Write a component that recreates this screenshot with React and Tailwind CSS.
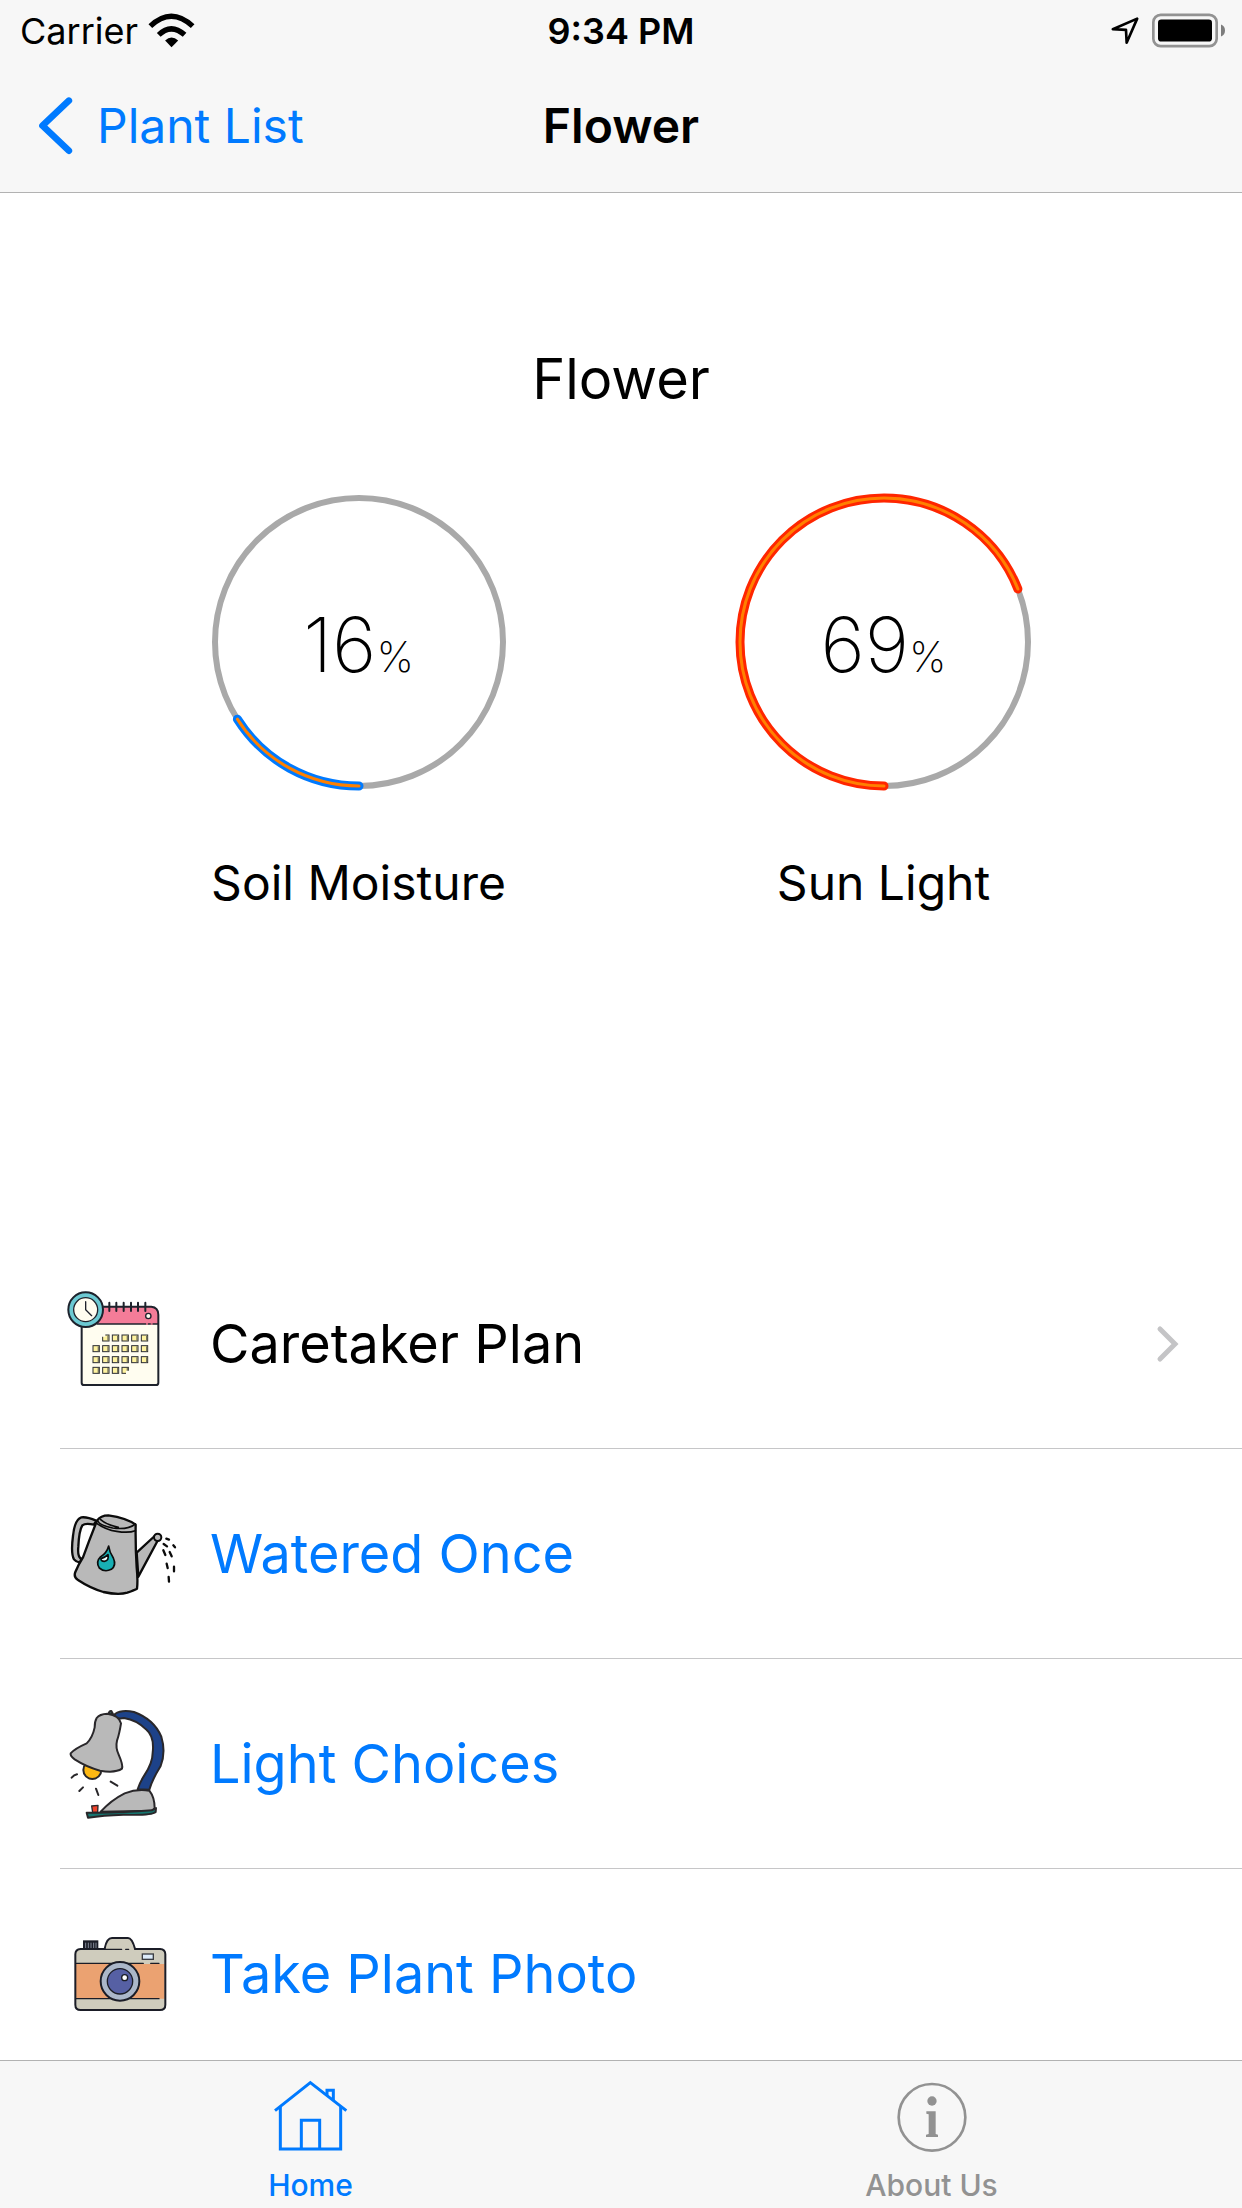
import React from "react";

function WifiIcon() {
  return (
    <svg viewBox="446 36 140 104" className="h-[35px] w-[47px]" aria-hidden="true">
      <g fill="none" stroke="#000">
        <path d="M453 75 Q515 16 579 75" strokeWidth="16" />
        <path d="M478 101 Q515 65 555 101" strokeWidth="16" />
      </g>
      <path d="M497 118 Q516 99 536 118 L516 138 Z" fill="#000" />
    </svg>
  );
}

function LocationIcon() {
  return (
    <svg viewBox="64 48 90 88" className="h-[29px] w-[30px]" aria-hidden="true">
      <path d="M146 56 L72 88 L112 90 L114 129 Z" fill="none" stroke="#000" strokeWidth="8" strokeLinejoin="round" />
    </svg>
  );
}

function BatteryIcon() {
  return (
    <svg viewBox="189 38 222 104" className="h-[35px] w-[74px]" aria-hidden="true">
      <rect x="193" y="43" width="190" height="94" rx="22" fill="none" stroke="#929292" strokeWidth="8" />
      <rect x="207" y="57" width="162" height="66" rx="10" fill="#000" />
      <path d="M396 72 Q408 77 408 90 Q408 103 396 108 Z" fill="#7d7d7d" />
    </svg>
  );
}

function CalendarIcon() {
  const rows = [
    { y: 165, xs: [158, 187, 216, 245, 274] },
    { y: 197, xs: [129, 158, 187, 216, 245, 274] },
    { y: 230, xs: [129, 158, 187, 216, 245, 274] },
    { y: 262, xs: [129, 158, 187, 216] },
  ];
  return (
    <svg viewBox="30 12 360 360" className="size-[120px] shrink-0" aria-hidden="true">
      <path d="M95 130 H325 V308 Q325 315 318 315 H102 Q95 315 95 308 Z" fill="#fffdf0" />
      <path d="M110 80 H305 Q325 82 325 104 V132 H110 Z" fill="#f47c98" />
      <path d="M152 80 H304 Q325 82 325 104 V308 Q325 315 318 315 H102 Q95 315 95 308 V135" fill="none" stroke="#1e222c" strokeWidth="6" />
      <path d="M140 132 H325" stroke="#1e222c" strokeWidth="4" />
      <path d="M288 132 H294 M302 132 H308" stroke="#f47c98" strokeWidth="4" />
      <path d="M178 68 V93 M199 68 V93 M221 68 V93 M243 68 V93 M264 68 V93 M286 68 V93" stroke="#1e222c" strokeWidth="6" strokeLinecap="round" />
      <circle cx="295" cy="108" r="8" fill="#fffdf0" stroke="#1e222c" strokeWidth="4" />
      {rows.map((row) =>
        row.xs.map((x) => (
          <g key={`${row.y}-${x}`}>
            <rect x={x} y={row.y} width="19" height="18" fill="#fff3a0" stroke="#2a2c33" strokeWidth="3" />
            <path d={`M${x + 16} ${row.y + 2} V${row.y + 17}`} stroke="#77765c" strokeWidth="4" />
          </g>
        ))
      )}
      <path d="M154 160 H166 V170 H154 Z M228 272 H240 V285 H228 Z" fill="#fffdf0" />
      <circle cx="107" cy="89" r="45" fill="#fffdf0" stroke="#6cc9d2" strokeWidth="17" />
      <circle cx="107" cy="89" r="52" fill="none" stroke="#1e222c" strokeWidth="6" />
      <circle cx="107" cy="89" r="36" fill="#fffdf0" stroke="#1e222c" strokeWidth="4" />
      <path d="M107 65 V89 L125 107" fill="none" stroke="#1e222c" strokeWidth="4" strokeLinecap="round" />
    </svg>
  );
}

function WateringCanIcon() {
  return (
    <svg viewBox="30 12 360 360" className="size-[120px] shrink-0" aria-hidden="true">
      <g stroke="#0b0b0b" strokeWidth="7" strokeLinejoin="round" strokeLinecap="round">
        <path d="M138 92 Q112 80 94 82 Q74 88 69 138 Q62 190 72 208 Q78 216 90 218 L94 206 Q82 202 85 170 Q87 122 97 106 Q106 98 132 104 Z" fill="#b9b9b9" />
        <path d="M260 188 L314 138 L324 150 L265 260 Z" fill="#b9b9b9" />
        <path d="M141 92 Q118 150 99 202 Q86 222 76 246 Q70 262 84 270 Q120 294 160 306 Q205 316 232 308 Q254 300 261 296 Q264 270 260 232 Q256 170 257 104 Q230 84 175 76 Q152 76 141 92 Z" fill="#b9b9b9" />
        <path d="M144 94 Q150 106 188 114 Q234 120 256 102 M140 100 Q168 120 200 124 Q236 130 256 122 M152 89 Q168 104 205 112" fill="none" strokeWidth="5" />
        <circle cx="323" cy="142" r="11" fill="#b9b9b9" strokeWidth="6" />
        <path d="M176 168 Q178 186 190 204 Q200 226 184 238 Q164 248 148 234 Q136 216 152 200 Q170 190 176 168 Z" fill="#18afb4" strokeWidth="5" />
        <path d="M174 194 Q178 212 163 214 Q152 214 153 206 Q166 202 174 194 Z" fill="#e7ffff" strokeWidth="5" />
        <path d="M349 146 L357 149 M341 162 L351 169 M370 166 L375 172 M340 181 L346 195 M359 186 L365 199 M350 221 L353 234 M372 230 V244 M356 261 L357 275" fill="none" />
      </g>
    </svg>
  );
}

function LampIcon() {
  return (
    <svg viewBox="30 42 360 360" className="size-[120px] shrink-0" aria-hidden="true">
      <g stroke="#29272a" strokeWidth="6" strokeLinejoin="round" strokeLinecap="round">
        <path d="M195 72 Q215 58 252 66 Q312 88 334 140 Q348 186 332 228 Q306 270 298 299 L263 298 Q270 276 283 256 Q308 218 308 188 Q314 140 288 118 Q260 90 222 84 Q205 88 195 80 Z" fill="#1d4289" />
        <path d="M176 72 Q177 62 184 63 L190 74 Z" fill="#2c6b62" />
        <circle cx="127" cy="240" r="27" fill="#fdb813" />
        <path d="M172 71 Q149 72 140 84 Q134 94 134 112 Q128 142 110 160 Q74 176 62 190 Q60 198 74 208 Q108 230 150 242 Q196 250 216 236 Q220 226 206 194 Q196 172 201 152 Q208 132 213 100 Q208 76 172 71 Z" fill="#b9b9b9" />
        <path d="M152 365 Q184 330 224 310 Q260 296 298 302 Q314 322 314 355 L306 362 Z" fill="#b9b9b9" />
        <path d="M110 368 Q200 370 306 361 L318 354 L317 366 Q304 377 220 374 Q160 376 114 383 Z" fill="#16756f" />
        <path d="M125 348 L144 346 L143 366 L128 367 Z" fill="#f0442c" strokeWidth="4" />
        <path d="M65 263 Q72 255 81 253 M88 303 L99 292 M138 296 L145 315 M182 275 L202 287" fill="none" />
      </g>
    </svg>
  );
}

function CameraIcon() {
  return (
    <svg viewBox="30 -18 360 360" className="size-[120px] shrink-0" aria-hidden="true">
      <rect x="76" y="87" width="270" height="183" rx="16" fill="#cfccbd" />
      <path d="M78 132 H344 V236 H78 Z" fill="#eba271" />
      <path d="M164 88 Q168 54 184 54 H238 Q250 58 255 88 Z" fill="#cfccbd" />
      <g stroke="#1b1d27" strokeWidth="6" fill="none" strokeLinecap="round">
        <path d="M164 87 H92 Q76 88 76 103 V254 Q76 270 92 270 H330 Q346 270 346 254 V103 Q346 88 330 87 H255" />
        <path d="M164 86 Q170 54 186 54 H234 Q246 54 255 86" />
        <path d="M166 88 H215 M227 88 H236 M79 130 H280 M302 130 H327 M79 236 H327" strokeWidth="4" />
      </g>
      <rect x="99" y="61" width="46" height="26" fill="#1b1d27" />
      <path d="M107 68 V84 M115 68 V84 M123 68 V84 M131 68 V84 M138 68 V84" stroke="#848a99" strokeWidth="3" />
      <rect x="277" y="102" width="33" height="16" fill="#dcebfa" stroke="#3a3c42" strokeWidth="4" />
      <circle cx="210" cy="184" r="58" fill="#abb7c9" stroke="#1b1d27" strokeWidth="6" />
      <circle cx="210" cy="184" r="38" fill="#5660a4" stroke="#1b1d27" strokeWidth="4" />
      <circle cx="224" cy="173" r="9" fill="#fff" stroke="#1b1d27" strokeWidth="4" />
    </svg>
  );
}

function HomeIcon() {
  return (
    <svg viewBox="102 90 222 222" className="size-[74px]" fill="none" stroke="currentColor" strokeWidth="9" aria-hidden="true">
      <path d="M105 182 L211 98 L319 182" />
      <path d="M121 171 V297 H302 V171" />
      <path d="M184 297 V211 H239 V297" />
      <path d="M261 136 V121 H280 V150" />
    </svg>
  );
}

function InfoIcon() {
  return (
    <svg viewBox="163 90 222 222" className="size-[74px]" fill="currentColor" aria-hidden="true">
      <circle cx="274" cy="202" r="100" fill="none" stroke="currentColor" strokeWidth="8" />
      <circle cx="274" cy="153" r="14" />
      <path d="M257 184 H285 V252 L292 254 V261 H256 V254 L264 252 V193 L257 191 Z" />
    </svg>
  );
}

function Gauge({ value, label, color }) {
  return (
    <div className="flex flex-col items-center">
      <div className="grid place-items-center">
        <svg viewBox="-150 -150 300 300" className="col-start-1 row-start-1 size-[300px]" fill="none" aria-hidden="true">
          <circle r="144" stroke="#a9a9a9" strokeWidth="6" />
          <g transform="rotate(90)" strokeLinecap="round">
            <circle r="144" pathLength="100" strokeDasharray={`${value} 100`} stroke={color} strokeWidth="9" />
            <circle r="144" pathLength="100" strokeDasharray={`${value} 100`} stroke="#ff8000" strokeWidth="3" />
          </g>
        </svg>
        <p className="col-start-1 row-start-1 pt-1 text-[76px] leading-none font-extralight">
          {value}
          <span className="text-[42px]">%</span>
        </p>
      </div>
      <h2 className="mt-[61px] text-[48px] leading-[60px]">{label}</h2>
    </div>
  );
}

const actions = [
  { label: "Caretaker Plan", Icon: CalendarIcon, link: true },
  { label: "Watered Once", Icon: WateringCanIcon },
  { label: "Light Choices", Icon: LampIcon },
  { label: "Take Plant Photo", Icon: CameraIcon },
];

function ActionRow({ label, Icon, link }) {
  const row = "flex h-[209px] w-full items-center gap-[30px] pr-[62px] text-left text-[54px]";
  return (
    <li className="border-b border-[#c6c6c8]">
      {link ? (
        <a href="#plan" className={`${row} text-black`}>
          <Icon />
          <span>{label}</span>
          <svg viewBox="0 0 24 38" className="ml-auto h-[38px] w-6" fill="none" stroke="#c4c4c6" strokeWidth="5" strokeLinecap="round" aria-hidden="true">
            <path d="M4 4 L19 19 L4 34" />
          </svg>
        </a>
      ) : (
        <button type="button" className={`${row} text-[#007aff]`}>
          <Icon />
          <span>{label}</span>
        </button>
      )}
    </li>
  );
}

export default function App() {
  return (
    <div className="flex h-screen flex-col bg-white font-['Inter',sans-serif] text-black">
      <header className="border-b border-[#b2b2b2] bg-[#f7f7f7]">
        <div className="grid h-[60px] grid-cols-3 items-center px-4 pt-px text-[36px]">
          <div className="flex items-center gap-[10px] pl-1">
            <span>Carrier</span>
            <WifiIcon />
          </div>
          <time className="text-center font-semibold">9:34 PM</time>
          <div className="flex items-center justify-end gap-3">
            <LocationIcon />
            <BatteryIcon />
          </div>
        </div>
        <nav className="grid h-[132px] grid-cols-[1fr_auto_1fr] items-center px-[38px] text-[48px]">
          <a href="#plants" className="flex items-center gap-6 text-[#007aff]">
            <svg viewBox="114 288 104 180" className="h-[60px] w-[35px]" fill="none" stroke="currentColor" strokeWidth="20" strokeLinecap="round" strokeLinejoin="round" aria-hidden="true">
              <path d="M206 302 L127 377 L206 452" />
            </svg>
            Plant List
          </a>
          <h1 className="font-semibold">Flower</h1>
        </nav>
      </header>

      <main className="min-h-0 flex-1 overflow-y-auto [scrollbar-width:none]">
        <section className="px-24 pt-[150px] pb-[326px]">
          <h2 className="text-center text-[56px] leading-[72px]">Flower</h2>
          <div className="mt-[77px] grid grid-cols-2">
            <Gauge value={16} label="Soil Moisture" color="#007aff" />
            <Gauge value={69} label="Sun Light" color="#ff2600" />
          </div>
        </section>
        <ul className="pl-[60px]">
          {actions.map((action) => (
            <ActionRow key={action.label} {...action} />
          ))}
        </ul>
      </main>

      <nav className="grid h-[148px] shrink-0 grid-cols-2 border-t border-[#b2b2b2] bg-[#f7f7f7] pt-[19px] text-[30px] leading-9 font-medium">
        <a href="#home" aria-current="page" className="flex flex-col items-center gap-[13px] text-[#007aff]">
          <HomeIcon />
          Home
        </a>
        <a href="#about" className="flex flex-col items-center gap-[13px] text-[#929292]">
          <InfoIcon />
          About Us
        </a>
      </nav>
    </div>
  );
}
